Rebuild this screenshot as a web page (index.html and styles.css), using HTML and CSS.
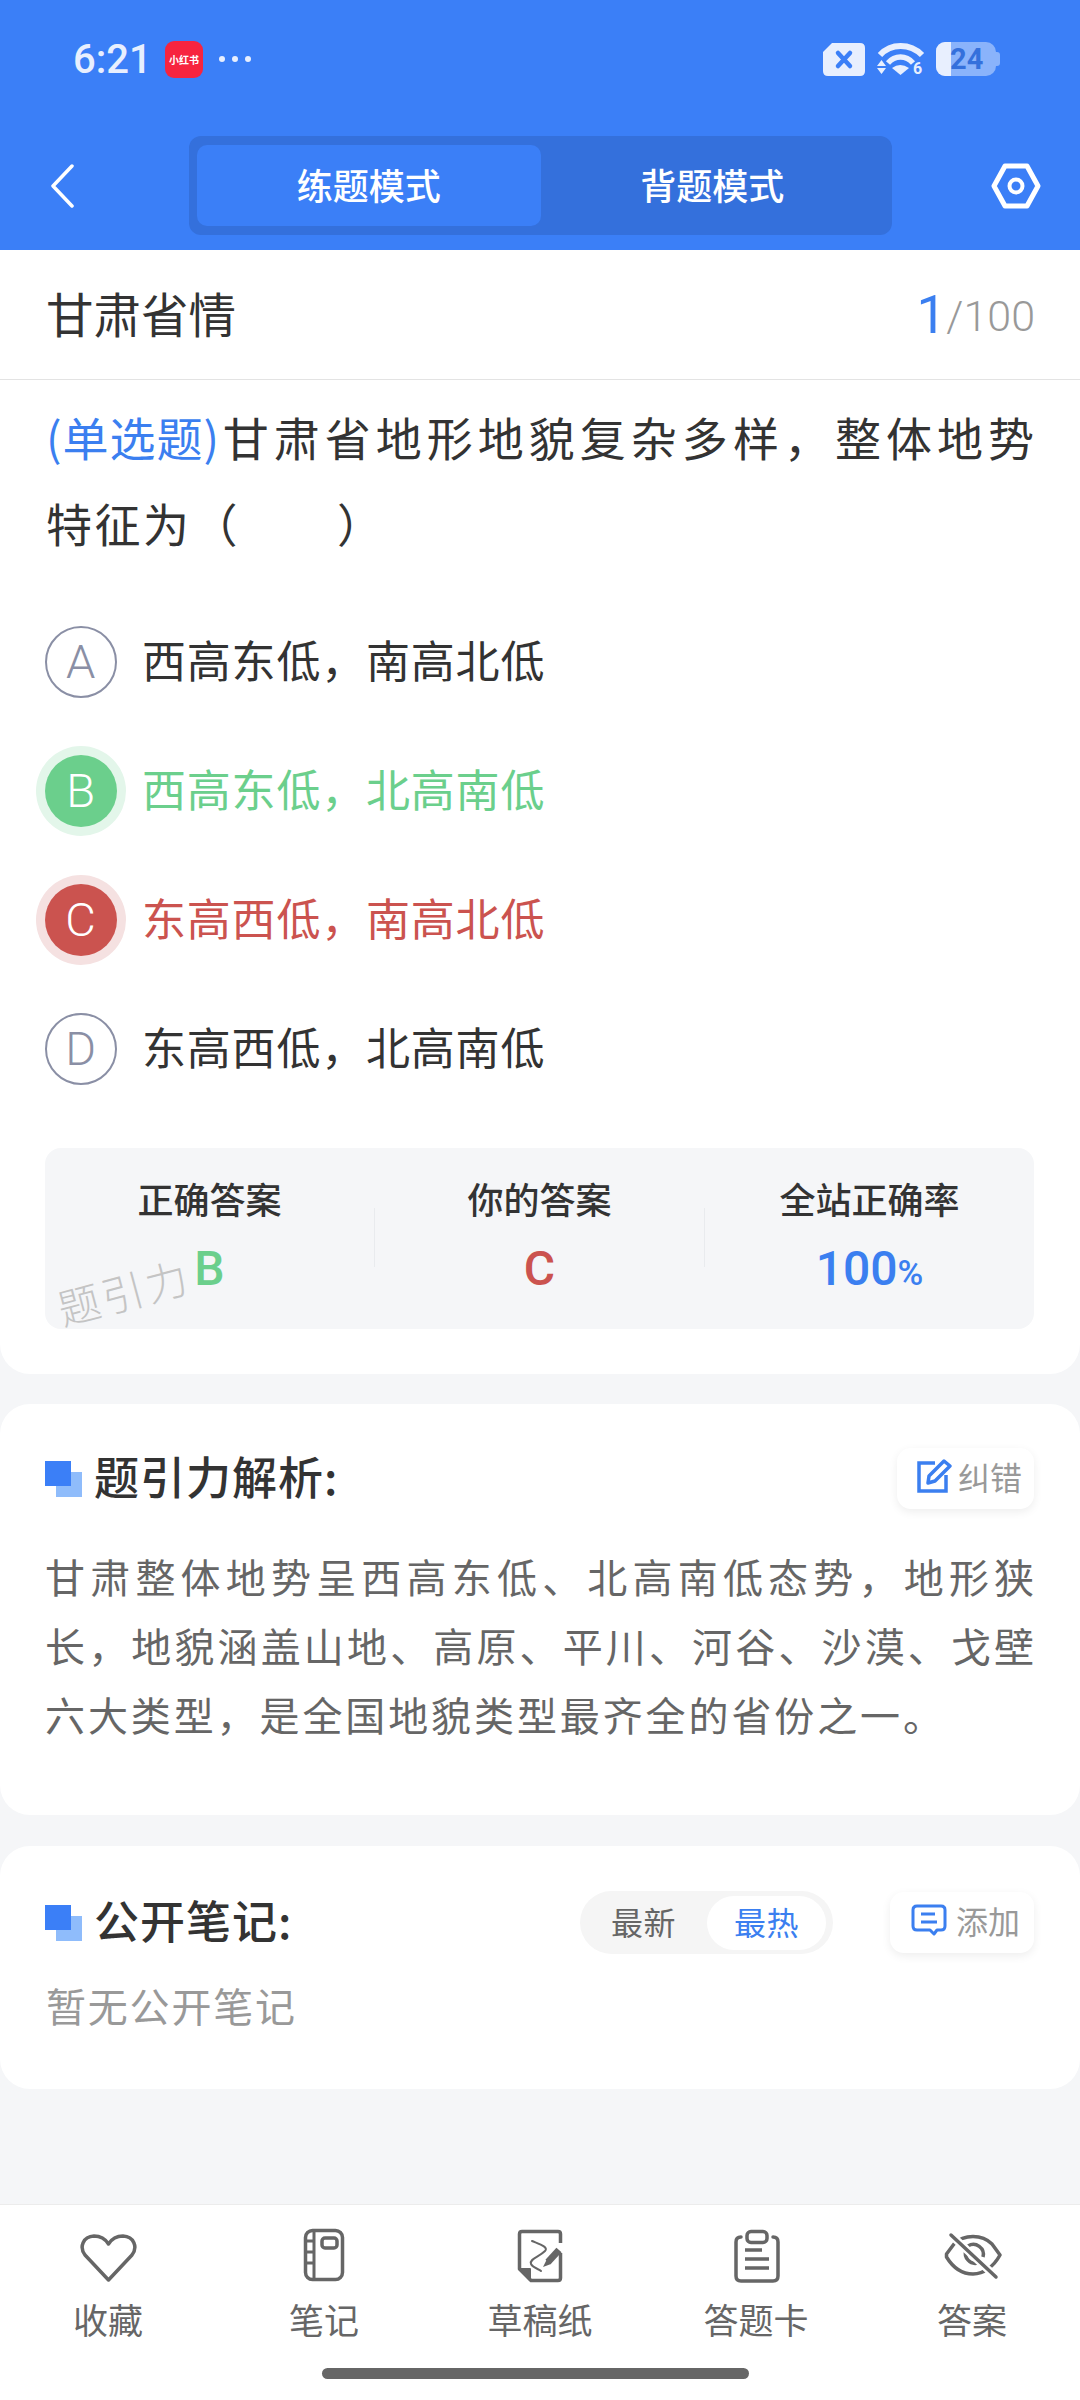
FILE: index.html
```html
<!DOCTYPE html>
<html lang="zh-CN">

<head>
    <meta charset="UTF-8">
    <title>甘肃省情</title>
    <link rel="stylesheet" href="styles.css">
</head>

<body>
    <header class="top">
        <div class="status">
            <span class="time">6:21</span>
            <span class="app-badge">小红书</span>
            <span class="dots"><i></i><i></i><i></i></span>
            <svg class="sim" width="44" height="35" viewBox="0 0 44 35">
                <path d="M10 1H38Q43 1 43 6V29Q43 34 38 34H6Q1 34 1 29V10Z" fill="#e8effe" />
                <path d="M16 11L28 24M28 11L16 24" stroke="#3b7ff7" stroke-width="4.5" stroke-linecap="round" />
            </svg>
            <svg class="wifi" width="48" height="36" viewBox="0 0 48 36">
                <path d="M3 14C14 2 33 2 45 14" fill="none" stroke="#e8effe" stroke-width="6" />
                <path d="M11 22C18 14 29 14 36 22" fill="none" stroke="#e8effe" stroke-width="5.5" />
                <path d="M15 27Q23 21 32 27L23.500 34Z" fill="#e8effe" />
                <path d="M4.500 19L9 25H0ZM0 27H9L4.500 33Z" fill="#e8effe" />
                <text class="wifi-six" x="36" y="33">6</text>
            </svg>
            <span class="battery"><span class="battery-fill"></span><span class="battery-num">24</span></span>
        </div>
        <div class="topnav">
            <svg class="back" width="24" height="44" viewBox="0 0 24 44">
                <path d="M22 2L3 22L22 42" fill="none" stroke="#fff" stroke-width="3.500" stroke-linecap="round" stroke-linejoin="round" />
            </svg>
            <div class="tabs">
                <span class="tab tab-on">练题模式</span>
                <span class="tab">背题模式</span>
            </div>
            <svg class="setting" width="50" height="46" viewBox="0 0 50 46">
                <path d="M3 23L14 3H36L47 23L36 43H14Z" fill="none" stroke="#fff" stroke-width="5" stroke-linejoin="round" />
                <circle cx="25" cy="23" r="6.500" fill="none" stroke="#fff" stroke-width="4" />
            </svg>
        </div>
    </header>

    <section class="card card-main">
        <div class="title-row">
            <span class="title">甘肃省情</span>
            <span class="count"><b>1</b>/100</span>
        </div>
        <p class="question"><span class="q-type">(单选题)</span>甘肃省地形地貌复杂多样，整体地势特征为（　　）</p>

        <div class="options">
            <div class="option">
                <span class="letter">A</span>
                <span class="option-text">西高东低，南高北低</span>
            </div>
            <div class="option option-right">
                <span class="letter">B</span>
                <span class="option-text">西高东低，北高南低</span>
            </div>
            <div class="option option-wrong">
                <span class="letter">C</span>
                <span class="option-text">东高西低，南高北低</span>
            </div>
            <div class="option">
                <span class="letter">D</span>
                <span class="option-text">东高西低，北高南低</span>
            </div>
        </div>

        <div class="stats">
            <div class="stat">
                <span class="stat-label">正确答案</span>
                <span class="stat-value green">B</span>
            </div>
            <span class="stat-line"></span>
            <div class="stat">
                <span class="stat-label">你的答案</span>
                <span class="stat-value red">C</span>
            </div>
            <span class="stat-line"></span>
            <div class="stat">
                <span class="stat-label">全站正确率</span>
                <span class="stat-value blue">100<small>%</small></span>
            </div>
            <span class="watermark">题引力</span>
        </div>
    </section>

    <section class="card card-analysis">
        <div class="sec-head">
            <span class="squares"></span>
            <h2 class="sec-title">题引力解析:</h2>
            <span class="small-btn small-btn-fix">
                <svg width="36" height="36" viewBox="0 0 36 36">
                    <path d="M19 5H3V33H30V17" fill="none" stroke="#3b7ff0" stroke-width="3.500" />
                    <path d="M12 25L13 18L28 3L34 8L19 23Z" fill="none" stroke="#3b7ff0" stroke-width="3.500" stroke-linejoin="round" />
                </svg>
                纠错
            </span>
        </div>
        <p class="analysis">甘肃整体地势呈西高东低、北高南低态势，地形狭长，地貌涵盖山地、高原、平川、河谷、沙漠、戈壁六大类型，是全国地貌类型最齐全的省份之一。</p>
    </section>

    <section class="card card-notes">
        <div class="sec-head">
            <span class="squares"></span>
            <h2 class="sec-title">公开笔记:</h2>
            <div class="seg">
                <span class="seg-item">最新</span>
                <span class="seg-item seg-on">最热</span>
            </div>
            <span class="small-btn small-btn-add">
                <svg width="36" height="32" viewBox="0 0 36 32">
                    <path d="M6 2H30Q34 2 34 6V22Q34 26 30 26H26L23 30L19 26H6Q2 26 2 22V6Q2 2 6 2Z" fill="none" stroke="#3b7ff0" stroke-width="3" stroke-linejoin="round" />
                    <path d="M10 10H24M10 18H26" stroke="#3b7ff0" stroke-width="3" />
                </svg>
                添加
            </span>
        </div>
        <p class="no-notes">暂无公开笔记</p>
    </section>

    <footer class="bottom">
        <nav class="bottom-nav">
            <div class="nav-item">
                <svg width="60" height="60" viewBox="0 0 60 60">
                    <path d="M30.500 54L7 29C1 21 5 10.500 16 10C23 10 28 14 30.500 18C33 14 38 10 45 10C56 10.500 60 21 54 29Z" fill="none" stroke="#666" stroke-width="3.500" stroke-linejoin="round" />
                </svg>
                <span>收藏</span>
            </div>
            <div class="nav-item">
                <svg width="60" height="60" viewBox="0 0 60 60">
                    <rect x="11.500" y="4.500" width="37" height="49" rx="7" fill="none" stroke="#666" stroke-width="3.500" />
                    <path d="M20 5V53M11 15H20M11 26H20M11 37H20" fill="none" stroke="#666" stroke-width="3" />
                    <rect x="28" y="12" width="15" height="10" rx="3" fill="none" stroke="#666" stroke-width="3.500" />
                </svg>
                <span>笔记</span>
            </div>
            <div class="nav-item">
                <svg width="60" height="60" viewBox="0 0 60 60">
                    <path d="M50.500 17V8Q50.500 5.500 48 5.500H12Q9.500 5.500 9.500 8V43L21 54.500H48Q50.500 54.500 50.500 52V27" fill="none" stroke="#666" stroke-width="3.500" stroke-linejoin="round" />
                    <path d="M9.500 43H20V54Z" fill="#666" stroke="#666" stroke-width="2" stroke-linejoin="round" />
                    <path d="M22 15C29 18 39 21 35 25C29 31 19 33 21 38C23 42 29 43 31 45" fill="none" stroke="#666" stroke-width="2" stroke-linecap="round" />
                    <path d="M49 24L38 36" stroke="#666" stroke-width="7" />
                    <path d="M37 33L41 38L33 41Z" fill="#666" />
                </svg>
                <span>草稿纸</span>
            </div>
            <div class="nav-item">
                <svg width="60" height="60" viewBox="0 0 60 60">
                    <path d="M15 11Q10 11 10 16V50Q10 55 15 55H47Q52 55 52 50V16Q52 11 47 11" fill="none" stroke="#666" stroke-width="3.500" stroke-linecap="round" />
                    <rect x="21" y="5.500" width="20" height="11" rx="4" fill="none" stroke="#666" stroke-width="3.500" />
                    <path d="M19 24H36M19 33H43M19 42H43" fill="none" stroke="#666" stroke-width="3.500" />
                </svg>
                <span>答题卡</span>
            </div>
            <div class="nav-item">
                <svg width="60" height="60" viewBox="0 0 60 60">
                    <path d="M4.500 28L12 18C22 8 40 8 50 18L58 29C52 40 42 48 31 48C19 48 10 40 4.500 31Z" fill="none" stroke="#666" stroke-width="3.500" stroke-linejoin="round" />
                    <path d="M24 24A10 10 0 0 0 36 37M26 20A10 10 0 0 1 41 31" fill="none" stroke="#666" stroke-width="3.500" />
                    <path d="M9 9L54 51" stroke="#fff" stroke-width="8" />
                    <path d="M9 9L54 51" stroke="#666" stroke-width="3.500" stroke-linecap="round" />
                </svg>
                <span>答案</span>
            </div>
        </nav>
        <div class="home-bar"></div>
    </footer>
</body>

</html>
```

FILE: styles.css
```css
* {
    margin: 0;
    padding: 0;
    box-sizing: border-box;
}

body {
    width: 1080px;
    height: 2400px;
    overflow: hidden;
    display: flex;
    flex-direction: column;
    background-color: #f5f6f8;
    font-family: "Noto Sans CJK SC", "Noto Sans", sans-serif;
    color: #333;
}

/* top blue area */
.top {
    height: 250px;
    background-color: #3b7ff7;
}

.status {
    height: 118px;
    display: flex;
    align-items: center;
    padding-left: 73px;
}

.time {
    width: 92px;
    font-family: Roboto, sans-serif;
    font-size: 40px;
    font-weight: 500;
    color: #e8effe;
}

.app-badge {
    width: 38px;
    height: 37px;
    border-radius: 9px;
    background-color: #f7243f;
    color: #fff;
    font-size: 10px;
    font-weight: 700;
    line-height: 37px;
    text-align: center;
    white-space: nowrap;
}

.dots {
    display: flex;
    gap: 7px;
    margin-left: 16px;
}

.dots i {
    width: 6px;
    height: 6px;
    border-radius: 50%;
    background-color: #e8effe;
}

.sim {
    margin-left: 571px;
}

.wifi {
    margin-left: 11px;
}

.wifi-six {
    font-family: Roboto, sans-serif;
    font-size: 16px;
    font-weight: 700;
    fill: #e8effe;
}

.battery {
    position: relative;
    width: 60px;
    height: 34px;
    margin-left: 11px;
    border-radius: 9px 10px 10px 9px;
    background-color: #8ab3fb;
}

.battery::after {
    content: "";
    position: absolute;
    left: 60px;
    top: 10px;
    width: 4px;
    height: 14px;
    border-radius: 0 3px 3px 0;
    background-color: #8ab3fb;
}

.battery-fill {
    position: absolute;
    left: 0;
    top: 0;
    width: 15px;
    height: 34px;
    border-radius: 9px 0 0 9px;
    background-color: #e8effe;
}

.battery-num {
    position: absolute;
    left: 14px;
    top: 0;
    font-family: Roboto, sans-serif;
    font-size: 29px;
    font-weight: 700;
    line-height: 34px;
    color: #3470dc;
}

.topnav {
    height: 132px;
    display: flex;
    align-items: center;
    padding-top: 3px;
    padding-left: 50px;
}

.tabs {
    width: 703px;
    height: 99px;
    margin-left: 115px;
    padding: 9px 8px;
    display: flex;
    border-radius: 12px;
    background-color: #3470dc;
}

.tab {
    flex: 1;
    border-radius: 10px;
    color: #fff;
    font-size: 36px;
    font-weight: 500;
    line-height: 78px;
    text-align: center;
}

.tab-on {
    background-color: #3b7ff7;
}

.setting {
    margin-left: 99px;
}

/* cards */
.card {
    background-color: #fff;
}

.card-main {
    height: 1124px;
    padding: 0 46px;
    border-radius: 0 0 30px 30px;
}

.title-row {
    height: 130px;
    margin: 0 -46px;
    padding: 0 45px 0 46px;
    display: flex;
    align-items: center;
    justify-content: space-between;
    border-bottom: 1px solid #e3e3e3;
}

.title {
    padding-bottom: 4px;
    font-size: 47.500px;
    font-weight: 400;
}

.count {
    padding-bottom: 3px;
    font-family: Roboto, sans-serif;
    font-size: 43px;
    font-weight: 300;
    color: #999;
}

.count b {
    position: relative;
    top: 2px;
    font-size: 53px;
    font-weight: 400;
    color: #3b7ff0;
}

.question {
    margin: 13px -2.500px 0 0;
    font-size: 46px;
    line-height: 86px;
    letter-spacing: 2.500px;
    text-align: justify;
}

.q-type {
    display: inline-block;
    letter-spacing: 1px;
    color: #3b7ff0;
}

.options {
    margin: 32px 0 0 -1px;
}

.option {
    height: 129px;
    display: flex;
    align-items: center;
    gap: 25px;
    font-size: 44px;
    letter-spacing: 0.8px;
}

.option-text {
    padding-bottom: 5px;
}

.letter {
    width: 72px;
    height: 72px;
    border: 2px solid #8a8fa5;
    border-radius: 50%;
    font-family: Roboto, sans-serif;
    font-size: 47px;
    font-weight: 300;
    line-height: 68px;
    text-align: center;
    color: #8a8fa5;
}

.option-right {
    color: #6bcf8c;
}

.option-right .letter {
    border: 0;
    background-color: #6bcf8c;
    box-shadow: 0 0 0 9px #e3f6ea;
    color: #fff;
    line-height: 72px;
}

.option-wrong {
    color: #cb534f;
}

.option-wrong .letter {
    border: 0;
    background-color: #cb534f;
    box-shadow: 0 0 0 9px #f5e1e1;
    color: #fff;
    line-height: 72px;
}

.stats {
    position: relative;
    height: 181px;
    margin: 35px 0 0 -1px;
    display: flex;
    border-radius: 16px;
    background-color: #f5f6f8;
}

.stat {
    flex: 1;
    display: flex;
    flex-direction: column;
    align-items: center;
    padding-top: 25px;
}

.stat-label {
    font-size: 36px;
    font-weight: 500;
    line-height: 50px;
}

.stat-value {
    margin-top: 21px;
    font-family: Roboto, sans-serif;
    font-size: 48px;
    font-weight: 500;
    line-height: 50px;
}

.stat-value small {
    font-size: 35px;
}

.stat-line {
    width: 1px;
    height: 59px;
    margin-top: 60px;
    background-color: #e9ebee;
}

.green {
    color: #6bcf8c;
}

.red {
    color: #cb534f;
}

.blue {
    color: #3b7ff0;
}

.watermark {
    position: absolute;
    left: 11px;
    top: 118px;
    width: 135px;
    font-size: 42px;
    font-weight: 300;
    letter-spacing: 3px;
    line-height: 50px;
    color: #c4c4c4;
    white-space: nowrap;
    transform: rotate(-15deg);
}

.card-analysis {
    height: 411px;
    margin-top: 30px;
    padding: 44px 46px 0 45px;
    border-radius: 30px;
}

.card-notes {
    height: 243px;
    margin-top: 31px;
    padding: 45px 46px 0 45px;
    border-radius: 30px;
}

.sec-head {
    display: flex;
    align-items: center;
}

.squares {
    position: relative;
    flex: none;
    width: 37px;
    height: 36px;
}

.squares::before,
.squares::after {
    content: "";
    position: absolute;
    width: 26px;
    height: 25px;
}

.squares::before {
    right: 0;
    bottom: 0;
    background-color: #8fbcfb;
}

.squares::after {
    left: 0;
    top: 0;
    background-color: #3b7ff7;
}

.sec-title {
    margin-left: 12px;
    padding-bottom: 6px;
    font-size: 45px;
    font-weight: 500;
    letter-spacing: 1px;
    line-height: 50px;
    color: #333;
}

.small-btn {
    display: flex;
    align-items: center;
    gap: 9px;
    height: 61px;
    padding-bottom: 5px;
    border-radius: 14px;
    background-color: #fff;
    box-shadow: 0 3px 10px rgba(0, 0, 0, 0.07);
    font-size: 32px;
    color: #999;
}

.small-btn-fix {
    width: 137px;
    margin-left: auto;
    padding-left: 19px;
    gap: 6px;
}

.small-btn-add {
    width: 144px;
    margin-left: 57px;
    padding-left: 21px;
}

.analysis {
    margin: 33px -3px 0 0;
    font-size: 40px;
    line-height: 69px;
    letter-spacing: 2.9px;
    text-align: justify;
    color: #666;
}

.seg {
    width: 253px;
    height: 63px;
    margin-left: auto;
    padding: 5px 7px 4px 0;
    display: flex;
    border-radius: 32px;
    background-color: #f5f5f5;
    font-size: 32px;
    letter-spacing: 0.5px;
    line-height: 50px;
}

.seg-item {
    flex: 1;
    text-align: center;
    color: #666;
}

.seg-on {
    flex: none;
    width: 119px;
    border-radius: 27px;
    background-color: #fff;
    color: #3b7ff0;
}

.no-notes {
    margin-top: 21px;
    margin-left: 1px;
    font-size: 40px;
    line-height: 60px;
    letter-spacing: 1.8px;
    color: #999;
}

/* bottom bar */
.bottom {
    height: 196px;
    margin-top: auto;
    border-top: 1px solid #ececec;
    background-color: #fff;
}

.bottom-nav {
    display: flex;
    padding-top: 21px;
}

.nav-item {
    flex: 1;
    display: flex;
    flex-direction: column;
    align-items: center;
    gap: 13px;
    font-size: 35px;
    line-height: 40px;
    color: #666;
}

.home-bar {
    width: 427px;
    height: 11px;
    margin: 29px 0 0 322px;
    border-radius: 6px;
    background-color: #666;
}
```
